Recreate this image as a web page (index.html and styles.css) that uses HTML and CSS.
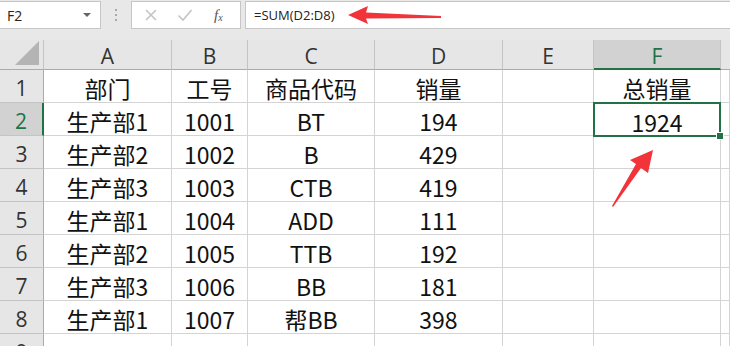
FILE: index.html
```html
<!DOCTYPE html>
<html>
<head>
<meta charset="utf-8">
<link rel="stylesheet" href="styles.css">
</head>
<body>
<div class="app">
  <div class="toolbar">
    <div class="namebox"><span class="nb-text">F2</span><span class="nb-caret"></span></div>
    <div class="dots"><i></i><i></i><i></i></div>
    <div class="fbtns">
      <svg class="ico" width="14" height="14" viewBox="0 0 14 14"><path d="M2 2 L12 12 M12 2 L2 12" stroke="#c4c4c4" stroke-width="1.6" fill="none"/></svg>
      <svg class="ico" width="16" height="14" viewBox="0 0 16 14"><path d="M1.5 7.5 L6 12 L14.5 2" stroke="#c4c4c4" stroke-width="1.6" fill="none"/></svg>
      <span class="fx"><i>f</i><sub>x</sub></span>
    </div>
    <div class="finput">=SUM(D2:D8)</div>
  </div>
  <div class="sheet">
    <div class="corner"><span class="tri"></span></div>
    <div class="ch">A</div><div class="ch">B</div><div class="ch">C</div><div class="ch">D</div><div class="ch">E</div><div class="ch sel">F</div><div class="ch last"></div>

    <div class="rh">1</div><div class="c">部门</div><div class="c">工号</div><div class="c">商品代码</div><div class="c">销量</div><div class="c"></div><div class="c">总销量</div><div class="c"></div>
    <div class="rh sel">2</div><div class="c">生产部1</div><div class="c">1001</div><div class="c">BT</div><div class="c">194</div><div class="c"></div><div class="c active">1924<span class="handle"></span></div><div class="c"></div>
    <div class="rh">3</div><div class="c">生产部2</div><div class="c">1002</div><div class="c">B</div><div class="c">429</div><div class="c"></div><div class="c"></div><div class="c"></div>
    <div class="rh">4</div><div class="c">生产部3</div><div class="c">1003</div><div class="c">CTB</div><div class="c">419</div><div class="c"></div><div class="c"></div><div class="c"></div>
    <div class="rh">5</div><div class="c">生产部1</div><div class="c">1004</div><div class="c">ADD</div><div class="c">111</div><div class="c"></div><div class="c"></div><div class="c"></div>
    <div class="rh">6</div><div class="c">生产部2</div><div class="c">1005</div><div class="c">TTB</div><div class="c">192</div><div class="c"></div><div class="c"></div><div class="c"></div>
    <div class="rh">7</div><div class="c">生产部3</div><div class="c">1006</div><div class="c">BB</div><div class="c">181</div><div class="c"></div><div class="c"></div><div class="c"></div>
    <div class="rh">8</div><div class="c">生产部1</div><div class="c">1007</div><div class="c">帮BB</div><div class="c">398</div><div class="c"></div><div class="c"></div><div class="c"></div>
    <div class="rh">9</div><div class="c"></div><div class="c"></div><div class="c"></div><div class="c"></div><div class="c"></div><div class="c"></div><div class="c"></div>
  </div>
  <svg class="arrows" width="730" height="346" viewBox="0 0 730 346">
    <path d="M348 15 L368 6 L366 12.5 L441 16 L441 18 L366 18.5 L368 24 Z" fill="#f2333a"/>
    <path d="M653 150 L648 173 L641 168 L613 207 L612 206 L636 164 L630 160 Z" fill="#f2333a"/>
  </svg>
</div>
</body>
</html>
```
FILE: styles.css
```css
* { box-sizing: border-box; }
html, body { margin: 0; padding: 0; background: #ffffff; }
.app {
  position: relative;
  width: 730px;
  height: 346px;
  overflow: hidden;
  font-family: "Noto Sans CJK SC", "Noto Sans", sans-serif;
}
.toolbar {
  height: 40px;
  background: #e8e8e8;
  display: flex;
  align-items: flex-start;
  padding-top: 1px;
}
.namebox {
  width: 101px;
  height: 28px;
  background: #fff;
  border: 1px solid #c6c6c6;
  border-left: none;
  display: flex;
  align-items: center;
  justify-content: space-between;
  padding: 0 7px 0 7px;
  font-family: "Open Sans", "Liberation Sans", sans-serif;
  font-size: 14px;
  color: #222;
}
.nb-caret {
  width: 0; height: 0;
  border-left: 4px solid transparent;
  border-right: 4px solid transparent;
  border-top: 4px solid #666;
  margin-right: 2px;
}
.dots {
  width: 30px;
  height: 28px;
  display: flex;
  flex-direction: column;
  align-items: center;
  justify-content: center;
  gap: 3px;
}
.dots i { display: block; width: 2px; height: 2px; background: #a8a8a8; }
.fbtns {
  width: 110px;
  height: 28px;
  background: #fff;
  border: 1px solid #c6c6c6;
  display: flex;
  align-items: center;
  padding-left: 12px;
  gap: 19px;
}
.fx {
  font-family: "Liberation Serif", serif;
  font-size: 15px;
  color: #555;
  margin-left: 2px;
}
.fx sub { font-size: 10px; font-style: italic; vertical-align: -1px; }
.finput {
  flex: 1;
  margin-left: 4px;
  height: 28px;
  background: #fff;
  border: 1px solid #c6c6c6;
  border-right: none;
  display: flex;
  align-items: center;
  padding-left: 8px;
  font-family: "Open Sans", "Liberation Sans", sans-serif;
  font-size: 13px;
  color: #222;
}
.sheet {
  display: grid;
  grid-template-columns: 44px 128px 76px 127px 128px 91px 127px 1fr;
  grid-template-rows: 30px repeat(9, 33px);
  background: #fff;
}
.corner {
  background: #e6e6e6;
  border-right: 1px solid #c4c4c4;
  border-bottom: 1px solid #ababab;
  position: relative;
}
.tri {
  position: absolute;
  right: 4px;
  bottom: 4px;
  width: 0; height: 0;
  border-left: 24px solid transparent;
  border-bottom: 24px solid #b4b4b4;
}
.ch {
  background: #e6e6e6;
  border-right: 1px solid #c4c4c4;
  border-bottom: 1px solid #ababab;
  display: flex;
  align-items: center;
  justify-content: center;
  padding-top: 3px;
  font-family: "Open Sans", "Liberation Sans", sans-serif;
  font-size: 21px;
  color: #333;
}
.ch.sel {
  background: #d2d2d2;
  color: #217346;
  border-bottom: 2px solid #217346;
}
.ch.last { border-right: none; }
.rh {
  background: #e6e6e6;
  border-right: 1px solid #ababab;
  border-bottom: 1px solid #c4c4c4;
  display: flex;
  align-items: center;
  justify-content: center;
  padding-top: 3px;
  font-family: "Open Sans", "Liberation Sans", sans-serif;
  font-size: 21px;
  color: #333;
}
.rh.sel {
  background: #d2d2d2;
  color: #217346;
  border-right: 2px solid #217346;
}
.c {
  border-right: 1px solid #d4d4d4;
  border-bottom: 1px solid #d4d4d4;
  display: flex;
  align-items: center;
  justify-content: center;
  padding-top: 4px;
  font-size: 23px;
  color: #111;
  position: relative;
  white-space: nowrap;
}
.c.active {
  border: 2px solid #217346;
  margin: -1px 0 -1px -1px;
  padding-top: 5px;
  z-index: 2;
}
.handle {
  position: absolute;
  right: -5px;
  bottom: -5px;
  width: 8px;
  height: 8px;
  background: #217346;
  border: 1px solid #fff;
}
.arrows {
  position: absolute;
  left: 0;
  top: 0;
  pointer-events: none;
  z-index: 3;
}
```
